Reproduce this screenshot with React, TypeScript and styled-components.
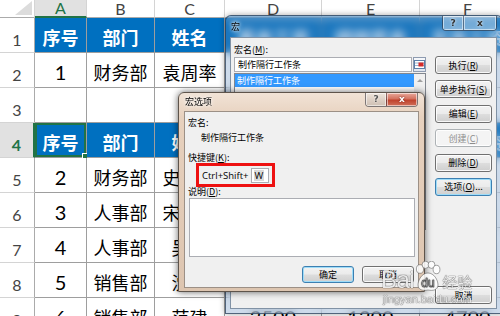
import React from 'react'
import styled, { createGlobalStyle, css } from 'styled-components'

const GlobalStyle = createGlobalStyle`
  * { box-sizing: border-box; }
  html, body { margin: 0; padding: 0; background: #fff; }
  body { font-family: 'Noto Sans CJK SC', sans-serif; }
`

const Screen = styled.div`
  position: relative;
  width: 500px;
  height: 316px;
  overflow: hidden;
  background: #fff;
`

/* ---------- spreadsheet ---------- */

const Sheet = styled.div`
  display: grid;
  grid-template-columns: 35px 52px 68px 70px 97px 98px 96px;
  grid-template-rows: 18px repeat(9, 35px);
  font-family: Lato, 'Noto Sans CJK SC', sans-serif;
  color: #000;
`

const Corner = styled.div`
  position: relative;
  background: #fff;
  border-right: 1px solid #d4d4d4;
  border-bottom: 1px solid #ababab;
  &::after {
    content: '';
    position: absolute;
    right: 2px;
    bottom: 2px;
    border-style: solid;
    border-width: 0 0 14px 17px;
    border-color: transparent transparent #dcdcdc transparent;
  }
`

const ColHead = styled.div<{ $active?: boolean }>`
  display: flex;
  align-items: center;
  justify-content: center;
  font-size: 16px;
  line-height: 16px;
  color: ${p => (p.$active ? '#217346' : '#444')};
  background: ${p => (p.$active ? '#e1e1e1' : '#fff')};
  border-right: 1px solid #d4d4d4;
  border-bottom: ${p => (p.$active ? '2px solid #217346' : '1px solid #ababab')};
`

const RowHead = styled.div<{ $active?: boolean }>`
  display: flex;
  align-items: flex-end;
  justify-content: center;
  padding-bottom: 4px;
  font-size: 16px;
  line-height: 1;
  font-weight: ${p => (p.$active ? 700 : 400)};
  color: ${p => (p.$active ? '#217346' : '#444')};
  background: ${p => (p.$active ? '#e1e1e1' : '#fff')};
  border-right: ${p => (p.$active ? '2px solid #217346' : '1px solid #ababab')};
  border-bottom: 1px solid #d4d4d4;
`

const Cell = styled.div<{ $band?: boolean; $num?: boolean; $selected?: boolean }>`
  position: relative;
  display: flex;
  align-items: center;
  justify-content: center;
  padding-top: 3px;
  white-space: nowrap;
  font-size: ${p => (p.$num ? '20px' : '18px')};
  font-weight: ${p => (p.$band ? 700 : 400)};
  color: ${p => (p.$band ? '#fff' : '#000')};
  background: ${p => (p.$band ? '#0070c0' : '#fff')};
  border-right: 1px solid #9e9e9e;
  border-bottom: 1px solid #9e9e9e;
  ${p =>
    p.$selected &&
    css`
      box-shadow: inset 0 0 0 2px #217346;
      &::after {
        content: '';
        position: absolute;
        right: -3px;
        bottom: -3px;
        width: 5px;
        height: 5px;
        background: #217346;
        border: 1px solid #fff;
      }
    `}
`

/* ---------- window chrome ---------- */

const MacroWindow = styled.div`
  position: absolute;
  left: 225px;
  top: 15px;
  width: 278px;
  height: 299px;
  display: flex;
  flex-direction: column;
  padding: 0 5px 4px 4px;
  border: 1px solid rgba(40, 60, 85, 0.75);
  border-radius: 6px 6px 0 0;
  background: rgba(90, 135, 190, 0.3);
  backdrop-filter: blur(4px);
  box-shadow: 0 0 6px rgba(0, 0, 0, 0.35);
  font-size: 9px;
  color: #000;
`

const OptionsWindow = styled.div`
  position: absolute;
  left: 178px;
  top: 92px;
  width: 247px;
  height: 200px;
  display: flex;
  flex-direction: column;
  padding: 0 5px 4px 5px;
  border: 1px solid #5e544b;
  border-radius: 6px 6px 0 0;
  background: linear-gradient(180deg, #f1e3d6 0%, #e7d1be 12%, #ddc5b0 100%);
  box-shadow: 0 0 7px rgba(0, 0, 0, 0.6);
  font-size: 9px;
  color: #000;
`

const TitleBar = styled.div<{ $h: number }>`
  height: ${p => p.$h}px;
  flex: none;
  display: flex;
  align-items: flex-start;
`

const TitleText = styled.span<{ $top: number }>`
  padding: ${p => p.$top}px 0 0 1px;
  line-height: 12px;
  text-shadow: 0 0 5px #fff, 0 0 3px #fff;
`

const Captions = styled.div<{ $mr?: number }>`
  margin-left: auto;
  margin-right: ${p => p.$mr ?? 0}px;
  display: flex;
  border-radius: 0 0 4px 4px;
  overflow: hidden;
  border: 1px solid rgba(50, 50, 60, 0.6);
  border-top: none;
`

const CaptionButton = styled.div<{ $w: number; $h: number; $red?: boolean; $glass?: boolean }>`
  width: ${p => p.$w}px;
  height: ${p => p.$h}px;
  display: flex;
  align-items: center;
  justify-content: center;
  font-family: 'DejaVu Sans', sans-serif;
  font-weight: 700;
  font-size: 9px;
  line-height: 1;
  box-shadow: inset 0 0 0 1px rgba(255, 255, 255, 0.55);
  & + & {
    border-left: 1px solid rgba(50, 50, 60, 0.5);
  }
  ${p =>
    p.$red
      ? css`
          color: #fff;
          background: linear-gradient(180deg, #e9a99b 0%, #d4725f 45%, #c0422c 55%, #d1705a 100%);
          text-shadow: 0 0 2px #6a1a10;
        `
      : p.$glass
      ? css`
          color: #333;
          background: rgba(255, 255, 255, 0.35);
          text-shadow: 0 0 3px #fff;
        `
      : css`
          color: #555;
          background: linear-gradient(180deg, #efe5dc 0%, #ddd0c5 50%, #cdbfb3 100%);
          text-shadow: 0 0 2px #fff;
        `}
`

const Key = styled.span`
  text-decoration: underline;
`

const Btn = styled.button<{ $default?: boolean; $disabled?: boolean }>`
  flex: none;
  width: 100%;
  height: 18px;
  padding: 0;
  display: flex;
  align-items: center;
  justify-content: center;
  white-space: nowrap;
  font-family: 'Noto Sans CJK SC', sans-serif;
  font-size: 9px;
  line-height: 1;
  color: ${p => (p.$disabled ? '#8d8d8d' : '#000')};
  border: 1px solid ${p => (p.$default ? '#3c7fb1' : p.$disabled ? '#adb2b5' : '#707070')};
  border-radius: 3px;
  background: ${p =>
    p.$disabled
      ? '#f4f4f4'
      : 'linear-gradient(180deg, #f2f2f2 0%, #ebebeb 48%, #dddddd 52%, #cfcfcf 100%)'};
  box-shadow: inset 0 0 0 1px ${p => (p.$default ? '#9edcf8' : 'rgba(255,255,255,0.85)')};
`

/* ---------- macro dialog body ---------- */

const MacroBody = styled.div`
  flex: 1;
  display: flex;
  gap: 9px;
  padding: 0 4px 4px 3px;
  background: #f0f0f0;
  border: 1px solid #8192a5;
`

const NameColumn = styled.div`
  width: 192px;
  display: flex;
  flex-direction: column;
  padding-top: 6px;
`

const Label = styled.div<{ $mt?: number; $ml?: number }>`
  line-height: 12px;
  margin-top: ${p => p.$mt ?? 0}px;
  margin-left: ${p => p.$ml ?? 0}px;
  white-space: nowrap;
`

const InputRow = styled.div`
  margin-top: 1px;
  display: flex;
  gap: 1px;
`

const TextInput = styled.div`
  flex: 1;
  height: 15px;
  display: flex;
  align-items: center;
  padding-left: 3px;
  background: #fff;
  border: 1px solid #abadb3;
`

const PickButton = styled.div`
  width: 13px;
  height: 15px;
  display: flex;
  align-items: center;
  justify-content: center;
  border: 1px solid #8e9bb0;
  background: linear-gradient(180deg, #f6f8fb, #dfe5ee);
`

const ListBox = styled.div`
  margin-top: 1px;
  height: 157px;
  display: flex;
  background: #fff;
  border: 1px solid #828790;
`

const ListItems = styled.div`
  flex: 1;
`

const ListItem = styled.div<{ $selected?: boolean }>`
  height: 13px;
  display: flex;
  align-items: center;
  padding-left: 2px;
  color: ${p => (p.$selected ? '#fff' : '#000')};
  background: ${p => (p.$selected ? '#3399ff' : 'transparent')};
`

const ScrollTrack = styled.div`
  width: 11px;
  background: #f0f0f0;
  display: flex;
  justify-content: center;
  padding-top: 5px;
  &::before {
    content: '';
    border-style: solid;
    border-width: 0 3px 3px 3px;
    border-color: transparent transparent #a0a0a0 transparent;
    height: 0;
  }
`

const ButtonColumn = styled.div`
  width: 57px;
  display: flex;
  flex-direction: column;
  gap: 6.4px;
  padding-top: 18px;
  & > :last-child {
    margin-top: auto;
  }
`

/* ---------- options dialog body ---------- */

const OptionsBody = styled.div`
  flex: 1;
  display: flex;
  flex-direction: column;
  align-items: flex-start;
  padding: 5px 4px 4px 3px;
  background: #f0f0f0;
  border: 1px solid #9c9086;
`

const HotkeyBox = styled.div`
  margin: -1px 0 0 8px;
  height: 24px;
  display: flex;
  align-items: center;
  gap: 2px;
  padding: 0 3px;
  border: 3px solid #ee1111;
`

const HotkeyText = styled.span`
  font-family: 'Open Sans', sans-serif;
  font-size: 9.5px;
  line-height: 11px;
  white-space: nowrap;
`

const KeyInput = styled.div`
  width: 18px;
  height: 15px;
  display: flex;
  align-items: center;
  padding-left: 2px;
  background: #fff;
  border: 1px solid #abadb3;
  & > span {
    background: #dadada;
    padding: 0 1px;
    font-family: 'Open Sans', sans-serif;
    font-size: 9.5px;
    line-height: 11px;
  }
`

const TextArea = styled.div`
  margin-left: 1px;
  width: 226px;
  height: 59px;
  background: #fff;
  border: 1px solid #abadb3;
`

const DialogButtons = styled.div`
  align-self: stretch;
  margin-top: 9px;
  display: flex;
  justify-content: flex-end;
  gap: 8px;
  & > button {
    width: 52px;
    height: 17px;
  }
`

/* ---------- watermark ---------- */

const Watermark = styled.div`
  position: absolute;
  left: 381px;
  top: 261px;
  display: flex;
  flex-direction: column;
  pointer-events: none;
  color: rgba(255, 255, 255, 0.9);
  text-shadow: 0 0 1px rgba(0, 0, 0, 0.75), 0 0 1px rgba(0, 0, 0, 0.5);
`

const MarkLine = styled.div`
  display: flex;
  align-items: flex-end;
`

const MarkBai = styled.span`
  font-family: 'Liberation Sans', sans-serif;
  font-size: 24px;
  line-height: 24px;
  letter-spacing: -0.5px;
`

const MarkJy = styled.span`
  font-family: 'Noto Sans CJK SC', sans-serif;
  font-size: 15px;
  line-height: 20px;
  margin-left: 1px;
`

const MarkUrl = styled.span`
  font-family: 'Liberation Sans', sans-serif;
  font-size: 11px;
  line-height: 12px;
  margin: 1px 0 0 2px;
`

/* ---------- data ---------- */

type Row = { n: number; band?: boolean; cells: string[] }

const HEAD = ['序号', '部门', '姓名', '基本工资', '绩效奖金', '实发工资']

const ROWS: Row[] = [
  { n: 1, band: true, cells: HEAD },
  { n: 2, cells: ['1', '财务部', '袁周率', '4500', '800', '5300'] },
  { n: 3, cells: ['', '', '', '', '', ''] },
  { n: 4, band: true, cells: HEAD },
  { n: 5, cells: ['2', '财务部', '史文恭', '4200', '600', '4800'] },
  { n: 6, cells: ['3', '人事部', '宋公明', '3900', '500', '4400'] },
  { n: 7, cells: ['4', '人事部', '吴用', '3800', '500', '4300'] },
  { n: 8, cells: ['5', '销售部', '沈括', '3600', '900', '4500'] },
  { n: 9, cells: ['6', '销售部', '范建', '3500', '1200', '4700'] },
]

const COLS = ['A', 'B', 'C', 'D', 'E', 'F']

const MACRO_BUTTONS = [
  { label: '执行', key: 'R' },
  { label: '单步执行', key: 'S' },
  { label: '编辑', key: 'E' },
  { label: '创建', key: 'C', disabled: true },
  { label: '删除', key: 'D' },
  { label: '选项', key: 'O', suffix: '...', primary: true },
]

const PickIcon = () => (
  <svg width="11" height="11" viewBox="0 0 11 11">
    <rect x="0.5" y="1.5" width="10" height="8" fill="#fff" stroke="#5b7fa8" />
    <line x1="1" y1="4" x2="10" y2="4" stroke="#9db4cf" />
    <line x1="1" y1="6.5" x2="10" y2="6.5" stroke="#9db4cf" />
    <rect x="4.5" y="3.5" width="5" height="4" fill="#d42a2a" />
  </svg>
)

const Paw = () => (
  <svg width="26" height="31" viewBox="0 0 26 31" style={{ marginLeft: 1 }}>
    <g fill="rgba(255,255,255,0.85)" stroke="rgba(80,80,80,0.65)" strokeWidth="0.8">
      <ellipse cx="5" cy="8" rx="3.6" ry="4.3" />
      <ellipse cx="10.5" cy="3.8" rx="3.4" ry="3.6" />
      <ellipse cx="16.5" cy="3.8" rx="3.4" ry="3.6" />
      <ellipse cx="21.5" cy="8.5" rx="3.4" ry="4.2" />
      <path d="M13 12 C7 12 3 19 3 24 C3 29 8 30 13 29 C18 30 23 29 23 24 C23 19 19 12 13 12 Z" />
    </g>
    <text
      x="13"
      y="26"
      textAnchor="middle"
      fontFamily="'Liberation Sans', sans-serif"
      fontSize="12"
      fill="rgba(255,255,255,0.95)"
      stroke="rgba(80,80,80,0.7)"
      strokeWidth="0.5"
    >
      du
    </text>
  </svg>
)

export default function App() {
  return (
    <Screen>
      <GlobalStyle />
      <Sheet>
        <Corner />
        {COLS.map(c => (
          <ColHead key={c} $active={c === 'A'}>
            {c}
          </ColHead>
        ))}
        {ROWS.map(row => (
          <React.Fragment key={row.n}>
            <RowHead $active={row.n === 4}>{row.n}</RowHead>
            {row.cells.map((text, i) => (
              <Cell
                key={i}
                $band={row.band}
                $num={/^\d+$/.test(text)}
                $selected={row.n === 4 && i === 0}
              >
                {text}
              </Cell>
            ))}
          </React.Fragment>
        ))}
      </Sheet>

      <MacroWindow>
        <TitleBar $h={21}>
          <TitleText $top={5}>宏</TitleText>
          <Captions>
            <CaptionButton $w={20} $h={14} $glass>?</CaptionButton>
            <CaptionButton $w={33} $h={14} $glass>x</CaptionButton>
          </Captions>
        </TitleBar>
        <MacroBody>
          <NameColumn>
            <Label>
              宏名(<Key>M</Key>):
            </Label>
            <InputRow>
              <TextInput>制作隔行工作条</TextInput>
              <PickButton>
                <PickIcon />
              </PickButton>
            </InputRow>
            <ListBox>
              <ListItems>
                <ListItem $selected>制作隔行工作条</ListItem>
              </ListItems>
              <ScrollTrack />
            </ListBox>
          </NameColumn>
          <ButtonColumn>
            {MACRO_BUTTONS.map(b => (
              <Btn key={b.key} $disabled={b.disabled} $default={b.primary}>
                {b.label}(<Key>{b.key}</Key>){b.suffix}
              </Btn>
            ))}
            <Btn>取消</Btn>
          </ButtonColumn>
        </MacroBody>
      </MacroWindow>

      <OptionsWindow>
        <TitleBar $h={18}>
          <TitleText $top={3}>宏选项</TitleText>
          <Captions $mr={1}>
            <CaptionButton $w={20} $h={13}>?</CaptionButton>
            <CaptionButton $w={31} $h={13} $red>x</CaptionButton>
          </Captions>
        </TitleBar>
        <OptionsBody>
          <Label>宏名:</Label>
          <Label $mt={3} $ml={13}>
            制作隔行工作条
          </Label>
          <Label $mt={8}>
            快捷键(<Key>K</Key>):
          </Label>
          <HotkeyBox>
            <HotkeyText>Ctrl+Shift+</HotkeyText>
            <KeyInput>
              <span>W</span>
            </KeyInput>
          </HotkeyBox>
          <Label $mt={-1}>
            说明(<Key>D</Key>):
          </Label>
          <TextArea />
          <DialogButtons>
            <Btn $default>确定</Btn>
            <Btn>取消</Btn>
          </DialogButtons>
        </OptionsBody>
      </OptionsWindow>

      <Watermark>
        <MarkLine>
          <MarkBai>Bai</MarkBai>
          <Paw />
          <MarkJy>经验</MarkJy>
        </MarkLine>
        <MarkUrl>jingyan.baidu.com</MarkUrl>
      </Watermark>
    </Screen>
  )
}
